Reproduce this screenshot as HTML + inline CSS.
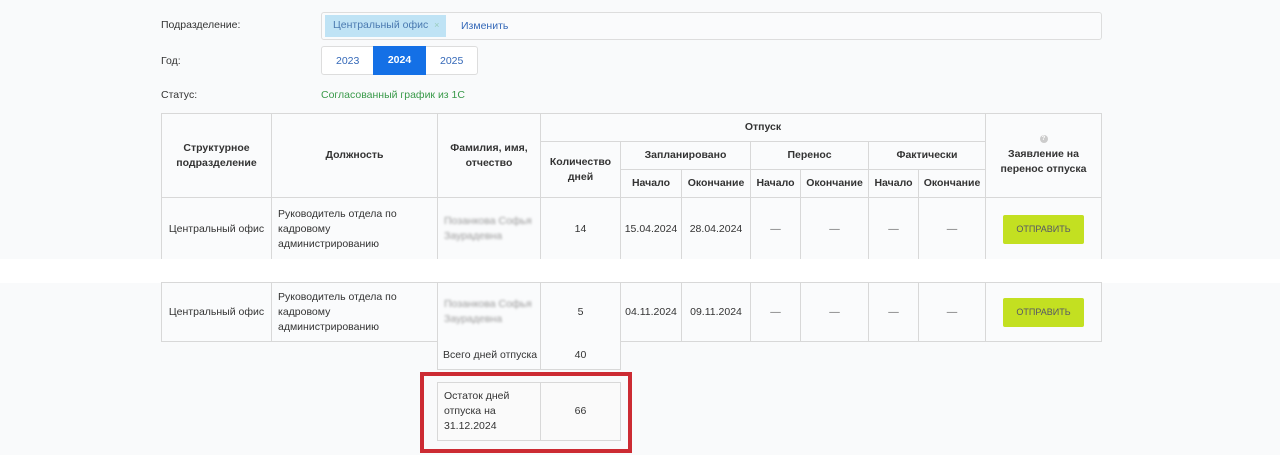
<!DOCTYPE html>
<html><head><meta charset="utf-8"><style>
*{box-sizing:border-box;margin:0;padding:0}
body{width:1280px;height:455px;background:#f9fafb;font-family:"Liberation Sans",sans-serif;font-size:10.5px;color:#333;position:relative;overflow:hidden}
.a{position:absolute}
.c{position:absolute;border:1px solid #d8d8d8;display:flex;align-items:center;justify-content:center;text-align:center;line-height:15px;padding:0 4px;background:#fafbfc}
.h{font-weight:bold;color:#333}
.l{justify-content:flex-start;text-align:left;padding-left:6px}
.blur{color:#999;filter:blur(1.4px)}
.btn{background:#c3e021;color:#556;font-size:9px;width:81px;height:29px;border-radius:2px;display:flex;align-items:center;justify-content:center}
.dash{color:#666}
</style></head><body>
<div class="a" style="left:161px;top:19px">Подразделение:</div>
<div class="a" style="left:321px;top:12px;width:781px;height:28px;border:1px solid #ddd;border-radius:3px;background:#fafbfc"></div>
<div class="a" style="left:325px;top:15px;width:121px;height:22px;background:#bfe3f5;color:#4a7ab0;padding:4px 0 0 8px">Центральный офис <span style="color:#9cb;font-size:9px;margin-left:3px">×</span></div>
<div class="a" style="left:461px;top:20px;color:#3468b8">Изменить</div>
<div class="a" style="left:161px;top:55px">Год:</div>
<div class="a" style="left:321px;top:46px;width:157px;height:29px;border:1px solid #ddd;border-radius:3px;background:#fff"></div>
<div class="a" style="left:336px;top:55px;color:#3468b8">2023</div>
<div class="a" style="left:373px;top:46px;width:53px;height:29px;background:#1470e6;color:#fff;font-weight:bold;text-align:center;padding-top:8px">2024</div>
<div class="a" style="left:440px;top:55px;color:#3468b8">2025</div>
<div class="a" style="left:161px;top:89px">Статус:</div>
<div class="a" style="left:321px;top:89px;color:#3a9a4a">Согласованный график из 1С</div>

<div class="c h" style="left:161px;top:113px;width:111px;height:85px">Структурное подразделение</div>
<div class="c h" style="left:271px;top:113px;width:167px;height:85px">Должность</div>
<div class="c h" style="left:437px;top:113px;width:104px;height:85px">Фамилия, имя, отчество</div>
<div class="c h" style="left:540px;top:113px;width:446px;height:29px">Отпуск</div>
<div class="c h" style="left:540px;top:141px;width:81px;height:57px">Количество дней</div>
<div class="c h" style="left:620px;top:141px;width:131px;height:29px">Запланировано</div>
<div class="c h" style="left:750px;top:141px;width:119px;height:29px">Перенос</div>
<div class="c h" style="left:868px;top:141px;width:118px;height:29px">Фактически</div>
<div class="c h" style="left:620px;top:169px;width:62px;height:29px">Начало</div>
<div class="c h" style="left:681px;top:169px;width:70px;height:29px">Окончание</div>
<div class="c h" style="left:750px;top:169px;width:51px;height:29px">Начало</div>
<div class="c h" style="left:800px;top:169px;width:69px;height:29px">Окончание</div>
<div class="c h" style="left:868px;top:169px;width:51px;height:29px">Начало</div>
<div class="c h" style="left:918px;top:169px;width:68px;height:29px">Окончание</div>
<div class="c h" style="left:985px;top:113px;width:117px;height:85px;flex-direction:column"><span style="display:block;width:8px;height:8px;border-radius:50%;background:#ccc;color:#fff;font-size:6px;line-height:8px;margin-bottom:4px">?</span><span>Заявление на перенос отпуска</span></div>

<!-- row 1 -->
<div class="c" style="left:161px;top:197px;width:111px;height:64px">Центральный офис</div>
<div class="c l" style="left:271px;top:197px;width:167px;height:64px">Руководитель отдела по кадровому администрированию</div>
<div class="c l" style="left:437px;top:197px;width:104px;height:64px"><span class="blur">Позанкова Софья Заурадевна</span></div>
<div class="c" style="left:540px;top:197px;width:81px;height:64px">14</div>
<div class="c" style="left:620px;top:197px;width:62px;height:64px">15.04.2024</div>
<div class="c" style="left:681px;top:197px;width:70px;height:64px">28.04.2024</div>
<div class="c dash" style="left:750px;top:197px;width:51px;height:64px">—</div>
<div class="c dash" style="left:800px;top:197px;width:69px;height:64px">—</div>
<div class="c dash" style="left:868px;top:197px;width:51px;height:64px">—</div>
<div class="c dash" style="left:918px;top:197px;width:68px;height:64px">—</div>
<div class="c" style="left:985px;top:197px;width:117px;height:64px"><div class="btn">ОТПРАВИТЬ</div></div>
<div class="a" style="left:0;top:259px;width:1280px;height:24px;background:#fff"></div>

<!-- row 2 -->
<div class="c" style="left:161px;top:282px;width:111px;height:60px">Центральный офис</div>
<div class="c l" style="left:271px;top:282px;width:167px;height:60px">Руководитель отдела по кадровому администрированию</div>
<div class="c l" style="left:437px;top:282px;width:104px;height:60px"><span class="blur">Позанкова Софья Заурадевна</span></div>
<div class="c" style="left:540px;top:282px;width:81px;height:60px">5</div>
<div class="c" style="left:620px;top:282px;width:62px;height:60px">04.11.2024</div>
<div class="c" style="left:681px;top:282px;width:70px;height:60px">09.11.2024</div>
<div class="c dash" style="left:750px;top:282px;width:51px;height:60px">—</div>
<div class="c dash" style="left:800px;top:282px;width:69px;height:60px">—</div>
<div class="c dash" style="left:868px;top:282px;width:51px;height:60px">—</div>
<div class="c dash" style="left:918px;top:282px;width:68px;height:60px">—</div>
<div class="c" style="left:985px;top:282px;width:117px;height:60px"><div class="btn">ОТПРАВИТЬ</div></div>

<div class="c l" style="left:437px;top:341px;width:104px;height:29px;border-top:none;white-space:nowrap;padding-left:5px">Всего дней отпуска</div>
<div class="c" style="left:540px;top:341px;width:81px;height:29px;border-top:none">40</div>

<div class="c l" style="left:437px;top:382px;width:104px;height:59px;background:#fafafa">Остаток дней отпуска на 31.12.2024</div>
<div class="c" style="left:540px;top:382px;width:81px;height:59px;background:#fafafa">66</div>
<div class="a" style="left:420px;top:372px;width:212px;height:81px;border:4px solid #cc2b33"></div>
</body></html>
